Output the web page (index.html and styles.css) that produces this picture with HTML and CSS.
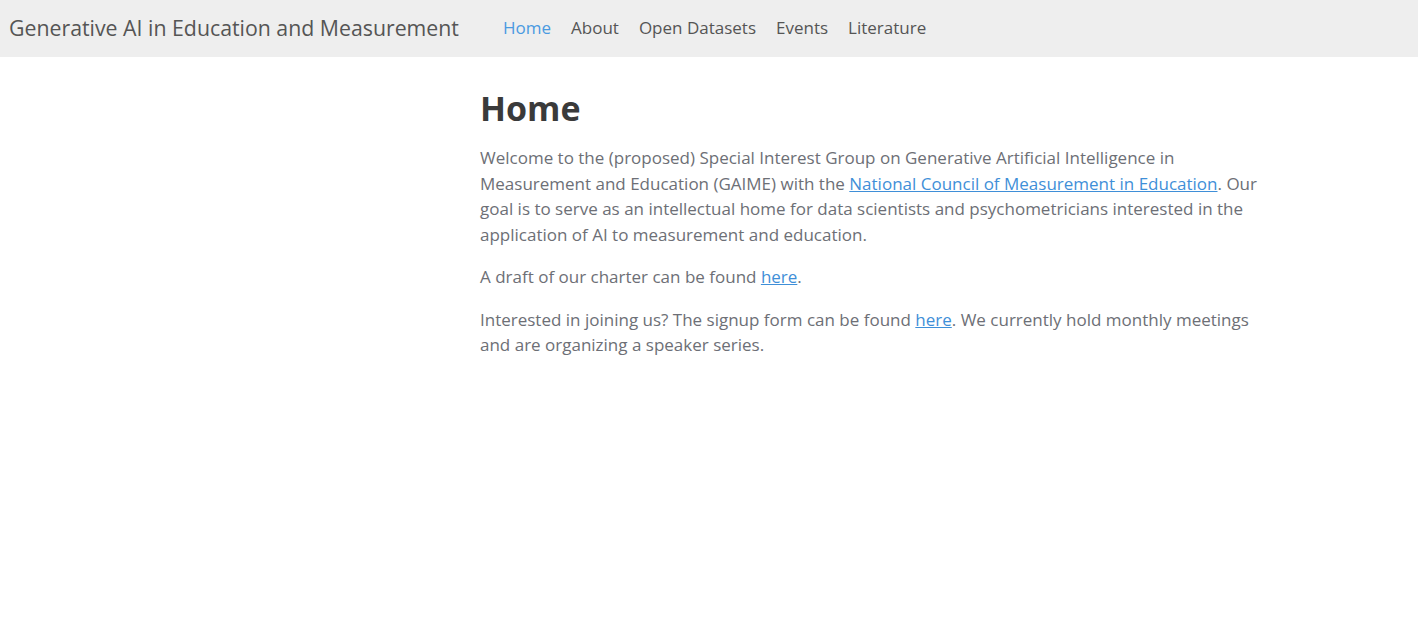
FILE: index.html
```html
<!DOCTYPE html>
<html lang="en">
<head>
<meta charset="utf-8">
<title>Generative AI in Education and Measurement</title>
<link rel="stylesheet" href="styles.css">
</head>
<body>
<header class="navbar">
  <a class="brand" href="#">Generative AI in Education and Measurement</a>
  <nav class="nav">
    <a class="nav-link active" href="#">Home</a>
    <a class="nav-link" href="#">About</a>
    <a class="nav-link" href="#">Open Datasets</a>
    <a class="nav-link" href="#">Events</a>
    <a class="nav-link" href="#">Literature</a>
  </nav>
</header>
<main class="layout">
  <aside class="sidebar"></aside>
  <article class="content">
    <h1 class="title">Home</h1>
    <p>Welcome to the (proposed) Special Interest Group on Generative Artificial Intelligence in Measurement and Education (GAIME) with the <a href="#">National Council of Measurement in Education</a>. Our goal is to serve as an intellectual home for data scientists and psychometricians interested in the application of AI to measurement and education.</p>
    <p>A draft of our charter can be found <a href="#">here</a>.</p>
    <p>Interested in joining us? The signup form can be found <a href="#">here</a>. We currently hold monthly meetings and are organizing a speaker series.</p>
  </article>
</main>
</body>
</html>
```
FILE: styles.css
```css
html, body {
  margin: 0;
  padding: 0;
  background: #fff;
  font-family: "Open Sans", "Noto Sans", sans-serif;
}
.navbar {
  display: flex;
  align-items: center;
  height: 57px;
  background: #eeeeee;
  padding: 0 9px 2px;
  box-sizing: border-box;
}
.brand {
  font-size: 21.3px;
  color: #555555;
  text-decoration: none;
  margin-right: 34px;
}
.nav {
  display: flex;
}
.nav-link {
  font-size: 17px;
  color: #555555;
  text-decoration: none;
  padding: 0 10px;
}
.nav-link.active {
  color: #4a9ae1;
}
.layout {
  display: grid;
  grid-template-columns: 480px 790px;
}
.content {
  color: #6d6f76;
  font-size: 17px;
  line-height: 25.5px;
}
.title {
  font-size: 34px;
  font-weight: 700;
  color: #3a3a3a;
  margin: 30px 0 16px;
  line-height: 42px;
}
.content p {
  margin: 0 0 17px;
}
.content a {
  color: #3f8fd8;
}
```
